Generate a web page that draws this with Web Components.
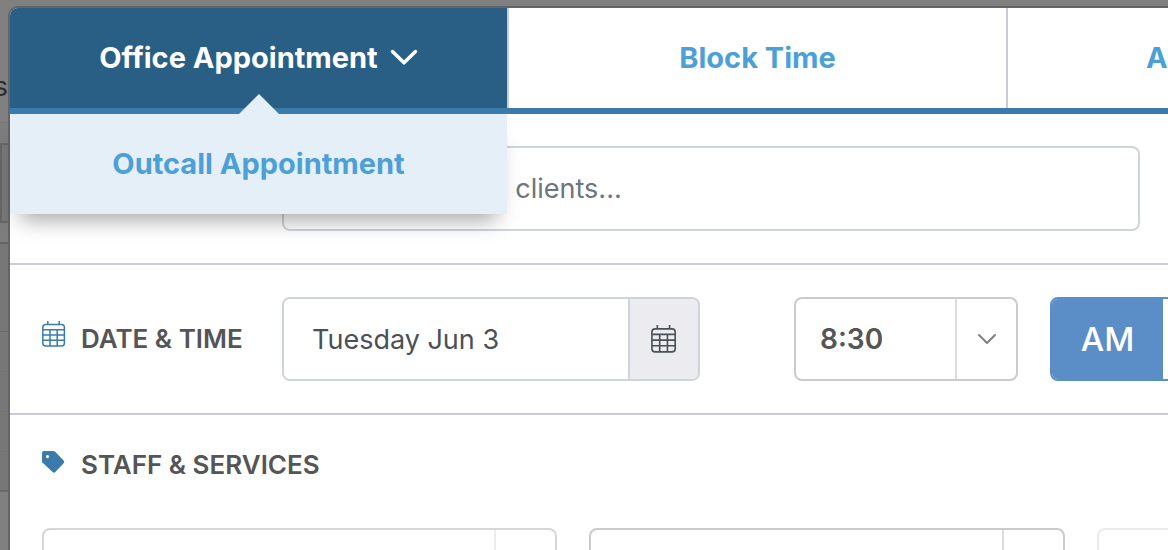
<!DOCTYPE html>
<html lang="en">
<head>
<meta charset="utf-8">
<meta name="viewport" content="width=device-width, initial-scale=1">
<title>New Appointment</title>
<style>
  :root {
    --blue: #3a7bac;
    --blue-dark: #295e85;
    --blue-light: #e5eff8;
    --link: #4d9fd8;
    --rule: #c9ccd8;
    --field: #ced4da;
    --text: #555;
  }

  body {
    margin: 0;
    overflow: hidden;
    background: #808080;
    color: var(--text);
    font-family: Inter, "Open Sans", sans-serif;
  }
</style>
</head>
<body>

<page-shell>
  <page-backdrop slot="backdrop">s</page-backdrop>

  <booking-modal>
    <nav-tab slot="tabs" active>
      Office Appointment
      <a slot="menu" href="#outcall">Outcall Appointment</a>
    </nav-tab>
    <nav-tab slot="tabs">Block Time</nav-tab>
    <nav-tab slot="tabs">Add to Wait List</nav-tab>

    <form-section>
      <search-field placeholder="Search existing clients..."></search-field>
    </form-section>

    <form-section heading="DATE &amp; TIME" icon="calendar">
      <date-field value="Tuesday Jun 3"></date-field>
      <time-group></time-group>
    </form-section>

    <form-section heading="STAFF &amp; SERVICES" icon="tag" stacked>
      <drop-select label="Service" tone="soft"></drop-select>
      <drop-select label="Staff"></drop-select>
      <drop-select label="Room" tone="faint"></drop-select>
    </form-section>
  </booking-modal>
</page-shell>

<script>
const ICONS = {
  calendar: `
    <svg width="24" height="26" viewBox="0 0 24 26" fill="none" stroke="currentColor" stroke-width="1.5">
      <rect x="0.8" y="3.6" width="21.6" height="21.4" rx="3"/>
      <path d="M5.8 0v3.6M17.2 0v3.6M.8 8.7h21.6M.8 14h21.6M.8 19.3h21.6M8 8.7V25M15.2 8.7V25"/>
    </svg>`,
  tag: `
    <svg width="24" height="28" viewBox="0 -4 24 28" fill="currentColor" fill-rule="evenodd">
      <path d="M2 0h9.200a3 3 0 0 1 2 .8l8.400 8.600a2 2 0 0 1 0 2.800l-8.300 8.900a1.800 1.800 0 0 1-2.700 0L.9 12a3 3 0 0 1-.9-2.100V2a2 2 0 0 1 2-2zM5.500 4a1.600 1.600 0 1 0 0 3.200 1.600 1.600 0 0 0 0-3.200z"/>
    </svg>`,
  chevron: `
    <svg width="28" height="18" viewBox="0 0 28 18" fill="none" stroke="currentColor" stroke-width="3.5" stroke-linecap="round" stroke-linejoin="round">
      <path d="M2.500 2.500L14 13.800 25.500 2.500"/>
    </svg>`,
  chevronSmall: `
    <svg width="20" height="12" viewBox="0 0 20 12" fill="none" stroke="currentColor" stroke-width="2" stroke-linecap="round" stroke-linejoin="round">
      <path d="M2 2l8 8 8-8"/>
    </svg>`
};

class BaseElement extends HTMLElement {
    connectedCallback() {
        if (this.shadowRoot) return;
        this.attachShadow({ mode: 'open' }).innerHTML = `
          <style>
            * { box-sizing: border-box; }
            button, input, select { font: inherit; margin: 0; }
            svg { display: block; flex: none; }
          </style>
          ${this.render()}`;
    }
}

// Stacks the dimmed page and the dialog in one grid cell
class PageShell extends BaseElement {
    render() {
        return `
          <style>
            :host { display: grid; grid-template: minmax(0, 1fr) / minmax(0, 1fr); height: 100vh; overflow: hidden; }
            ::slotted(*) { grid-area: 1 / 1; }
          </style>
          <slot name="backdrop"></slot>
          <slot></slot>`;
    }
}

class PageBackdrop extends BaseElement {
    render() {
        return `
          <style>
            :host { display: flex; flex-direction: column; width: 16px; background: #808080; color: #2c2c2c; }
            .top { height: 122px; padding-top: 70px; font-size: 27px; line-height: 34px; text-align: right; direction: rtl; margin: 0 8px 0 -8px; }
            .bar { height: 122px; padding: 20px 0; border-top: 1px solid #777; border-bottom: 2px solid #666; background: #7d7d7d; }
            .box { height: 80px; border: 2px solid #666; background: #777; }
            .slot { height: 40px; border-bottom: 1px solid #737373; background: #777; }
            .slot.first { height: 88px; border-color: #696969; }
            .slot.last { border-bottom: 2px solid #696969; }
          </style>
          <div class="top"><slot></slot></div>
          <div class="bar"><div class="box"></div></div>
          <div class="slot first"></div>
          <div class="slot"></div>
          <div class="slot"></div>
          <div class="slot"></div>
          <div class="slot last"></div>`;
    }
}

class BookingModal extends BaseElement {
    render() {
        return `
          <style>
            /* The dialog is wider than the window and runs off its right side */
            :host {
              display: block;
              align-self: start;
              width: 128vw;
              min-height: 100vh;
              margin: 6px 0 0 8px;
              border: 2px solid #646464;
              border-radius: 10px;
              background: #fff;
            }
            nav { display: flex; border-bottom: 6px solid var(--blue); }
          </style>
          <nav><slot name="tabs"></slot></nav>
          <slot></slot>`;
    }
}

class NavTab extends BaseElement {
    render() {
        const active = this.hasAttribute('active');
        return `
          <style>
            :host {
              position: relative;
              box-sizing: border-box;
              flex: 1;
              border-right: 2px solid var(--rule);
              color: var(--link);
              font-size: 29px;
              font-weight: 700;
              line-height: 36px;
            }
            :host(:last-of-type) { border-right: 0; }
            button {
              display: flex;
              align-items: center;
              justify-content: center;
              gap: 12px;
              width: 100%;
              padding: 32px 16px;
              border: 0;
              background: none;
              color: inherit;
              white-space: nowrap;
              cursor: pointer;
            }
            :host([active]) button { border-top-left-radius: 8px; background: var(--blue-dark); color: #fff; }
            .menu {
              position: absolute;
              z-index: 1;
              top: calc(100% + 6px);
              left: 0;
              right: 0;
              padding: 32px 16px;
              background: var(--blue-light);
              box-shadow: 0 16px 20px -10px rgba(0, 0, 0, .35);
              text-align: center;
            }
            .menu::before {
              content: "";
              position: absolute;
              bottom: 100%;
              left: 50%;
              margin-left: -20px;
              border: 20px solid transparent;
              border-top: 0;
              border-bottom-color: var(--blue-light);
            }
            ::slotted(a) { color: var(--link); text-decoration: none; }
          </style>
          <button type="button"><slot></slot>${active ? ICONS.chevron : ''}</button>
          ${active ? '<div class="menu"><slot name="menu"></slot></div>' : ''}`;
    }
}

class FormSection extends BaseElement {
    render() {
        const heading = this.getAttribute('heading') || '';
        const icon = ICONS[this.getAttribute('icon')] || '';
        return `
          <style>
            :host {
              display: grid;
              grid-template-columns: 240px minmax(0, 1fr);
              align-items: center;
              padding: 32px;
              border-bottom: 2px solid var(--rule);
            }
            :host([stacked]) { grid-template-columns: minmax(0, 1fr); row-gap: 45px; }
            header { display: flex; gap: 15px; color: var(--blue); }
            h2 { margin: 0; color: var(--text); font-size: 26px; font-weight: 600; line-height: 36px; white-space: nowrap; }
            .content { display: flex; gap: 94px; }
            :host([stacked]) .content { display: grid; grid-template-columns: 515fr 477fr 376fr; gap: 32px; }
          </style>
          <header>${icon}${heading ? `<h2>${heading.replace('&', '&amp;')}</h2>` : ''}</header>
          <div class="content"><slot></slot></div>`;
    }
}

class SearchField extends BaseElement {
    render() {
        const text = this.getAttribute('placeholder');
        return `
          <style>
            :host { display: block; flex: 0 0 72%; }
            input {
              width: 100%;
              height: 85px;
              padding: 0 28px;
              border: 2px solid var(--field);
              border-radius: 8px;
              background: #fff;
              color: #495057;
              font-size: 27px;
            }
            input::placeholder { color: #6c757d; opacity: 1; }
          </style>
          <input type="search" aria-label="Client" placeholder="${text}">`;
    }
}

class DateField extends BaseElement {
    render() {
        return `
          <style>
            :host {
              display: flex;
              flex: 0 0 418px;
              box-sizing: border-box;
              min-height: 84px;
              overflow: hidden;
              border: 2px solid var(--field);
              border-radius: 8px;
            }
            input { flex: 1; min-width: 0; padding: 0 28px; border: 0; background: #fff; color: #495057; font-size: 27px; }
            button {
              display: grid;
              place-items: center;
              width: 70px;
              padding: 0;
              border: 0;
              border-left: 2px solid var(--field);
              background: #ebebf0;
              color: #495057;
            }
            button svg { width: 26px; height: 28px; }
          </style>
          <input type="text" aria-label="Date" value="${this.getAttribute('value')}">
          <button type="button" aria-label="Open calendar">${ICONS.calendar}</button>`;
    }
}

class TimeGroup extends BaseElement {
    render() {
        return `
          <style>
            :host { display: flex; gap: 32px; }
            drop-select { width: 224px; }
            .period { display: flex; overflow: hidden; border: 2px solid #5b8ec6; border-radius: 8px; }
            button { width: 111px; padding: 0; border: 0; background: #fff; color: #5b8ec6; font-size: 33px; }
            button[aria-pressed="true"] { background: #5b8ec6; color: #fff; font-weight: 500; }
          </style>
          <drop-select label="Time" value="8:30"></drop-select>
          <div class="period" role="group" aria-label="AM or PM">
            <button type="button" aria-pressed="true">AM</button>
            <button type="button" aria-pressed="false">PM</button>
          </div>`;
    }
}

class DropSelect extends BaseElement {
    render() {
        const value = this.getAttribute('value') || '';
        return `
          <style>
            :host {
              --line: #cbcbcb;
              --divider: #dcdcdc;
              display: grid;
              grid-template-columns: minmax(0, 1fr) 61px;
              box-sizing: border-box;
              min-height: 84px;
              border: 2px solid var(--line);
              border-radius: 8px;
            }
            :host([tone="soft"]) { --line: #d6d6d6; --divider: #ebebeb; }
            :host([tone="faint"]) { --line: #ebebeb; --divider: #f2f2f2; }
            select {
              grid-area: 1 / 1 / 2 / 3;
              appearance: none;
              padding: 0 85px 0 24px;
              border: 0;
              border-radius: 6px;
              background: none;
              color: var(--text);
              font-size: 28px;
              font-weight: 600;
            }
            .arrow {
              grid-area: 1 / 2;
              display: grid;
              place-items: center;
              border-left: 2px solid var(--divider);
              color: #808080;
              pointer-events: none;
            }
          </style>
          <select aria-label="${this.getAttribute('label')}"><option>${value}</option></select>
          <span class="arrow">${ICONS.chevronSmall}</span>`;
    }
}

customElements.define('page-shell', PageShell);
customElements.define('page-backdrop', PageBackdrop);
customElements.define('booking-modal', BookingModal);
customElements.define('nav-tab', NavTab);
customElements.define('form-section', FormSection);
customElements.define('search-field', SearchField);
customElements.define('date-field', DateField);
customElements.define('drop-select', DropSelect);
customElements.define('time-group', TimeGroup);
</script>
</body>
</html>
